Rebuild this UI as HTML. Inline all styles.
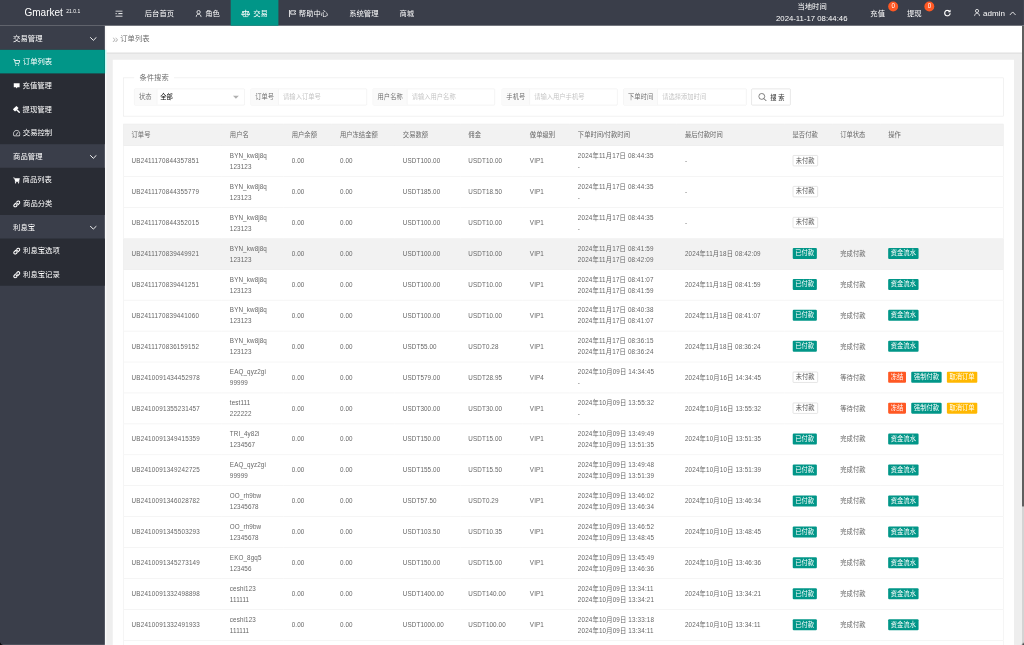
<!DOCTYPE html>
<html lang="zh-CN">
<head>
<meta charset="utf-8">
<title>Gmarket</title>
<style>
:root{--s:0.5243;}
*{box-sizing:border-box;margin:0;padding:0;}
html,body{width:1024px;height:645px;overflow:hidden;background:#f2f2f2;}
body{font-family:"Liberation Sans","Noto Sans CJK SC",sans-serif;color:#666;}
#app{position:absolute;left:0;top:0;width:1953.08px;height:1230.21px;transform:scale(var(--s)) rotate(0.0001deg);transform-origin:0 0;overflow:hidden;font-size:14px;opacity:.9999;}
.abs{position:absolute;}
svg{display:block;}
/* header */
.header{position:absolute;left:0;top:0;right:0;height:49.3px;background:#393d49;color:#fff;}
.logo{position:absolute;left:0;top:0;width:200px;height:49.3px;line-height:49.3px;color:#fff;}
.logo b{position:absolute;left:calc(24.5px / var(--s));top:0;font-weight:normal;font-size:19.1px;}
.logo sup{position:absolute;left:calc(66.3px / var(--s));top:-3.5px;font-size:9.5px;font-weight:normal;}
.nav{position:absolute;left:200px;top:0;height:49.3px;display:flex;}
.nav .it{height:49.3px;line-height:46px;padding:2.5px 20px 0;color:#fff;font-size:14px;display:flex;align-items:center;white-space:nowrap;}
.nav .it svg{margin-right:5px;}
.nav .it.on{background:#009688;}
.hr{position:absolute;top:0;height:50px;line-height:50px;color:#fff;font-size:14px;white-space:nowrap;}
.badge{position:absolute;width:19px;height:19px;border-radius:9.5px;background:#ff5722;color:#fff;font-size:12px;line-height:19px;text-align:center;}
/* side */
.side{position:absolute;left:0;top:49px;padding-top:1px;width:200px;bottom:0;background:#393d49;}
.side .p,.side .c{position:relative;height:45px;line-height:48px;color:#fff;font-size:14px;padding-left:25px;white-space:nowrap;}
.side .g{background:#282b33;}
.side .c{display:flex;align-items:center;}
.side .c svg{margin-right:5px;flex:none;margin-top:2px;}
.side .c.on{background:#009688;}
.side .p svg{position:absolute;right:15px;top:19.5px;}
/* body */
.main{position:absolute;left:200px;top:49px;right:0;bottom:0;background:#eeeeee;font-weight:350;}
.crumb{position:absolute;left:0;top:0;right:0;height:54px;background:#fff;line-height:50px;font-size:14px;color:#666;border-bottom:3.5px solid #e3e3e3;}
.crumb i{font-style:normal;color:#b5b5b5;position:absolute;left:calc(7.4px / var(--s));top:0.5px;font-size:21px;}
.crumb span{position:absolute;left:calc(15.4px / var(--s));}
.card{position:absolute;background:#fff;left:calc(8.1px / var(--s));top:calc(33.4px / var(--s) + 1px);right:calc(9.8px / var(--s));height:1400px;}
.fs{position:absolute;left:calc(10.2px / var(--s));right:calc(10.6px / var(--s));top:calc(17.8px / var(--s));height:calc(39.2px / var(--s));border:1px solid #e6e6e6;}
.fs .lg{position:absolute;left:20px;top:-12px;height:22px;line-height:22px;padding:0 10px;background:#fff;font-size:14px;color:#666;}
.grp{position:absolute;top:20px;height:32px;border:1px solid #e9e9e9;border-radius:2px;font-size:12px;line-height:31px;display:flex;background:#fff;}
.grp .lb{background:#fafafa;border-right:1px solid #f0f0f0;padding:0 8px;color:#666;white-space:nowrap;}
.grp .in{flex:1;padding-left:8px;color:#c0c0c0;white-space:nowrap;position:relative;}
.grp .in.v{color:#000;font-weight:400;padding-left:5.5px;}
.sbtn{position:absolute;top:20px;height:32px;border:1px solid #d2d2d2;border-radius:2px;font-size:12px;line-height:31px;color:#555;background:#fff;white-space:nowrap;}
/* table */
table{position:absolute;left:calc(10.2px / var(--s));top:calc(64.2px / var(--s));border-collapse:collapse;table-layout:fixed;font-size:12px;color:#666;background:linear-gradient(to bottom,#f2f2f2 0,#f2f2f2 41.5px,#fff 41.5px,#fff 218.5px,#f2f2f2 218.5px,#f2f2f2 277.5px,#fff 277.5px);}
th,td{border:1px solid #ececec;border-left:none;border-right:none;padding:0 15px;text-align:left;font-weight:normal;line-height:21px;padding-top:1.5px;white-space:nowrap;overflow:hidden;letter-spacing:.2px;}
thead th{height:41px;letter-spacing:0;padding-top:3.5px;}
tbody td{height:59px;}
td.o{letter-spacing:.4px;}
td.t{letter-spacing:.3px;}

table{border:1px solid #ececec;}
.btn{position:relative;top:-1.3px;display:inline-block;height:21px;line-height:21px;padding:0 5px;font-size:12px;border-radius:2px;color:#fff;margin-right:10px;vertical-align:middle;letter-spacing:0;}
.btn-g{background:#009688;}
.btn-r{background:#ff5722;}
.btn-y{background:#ffb800;}
.btn-pri{background:#fff;color:#555;border:1px solid #cfcfcf;line-height:19px;}
.sb{will-change:transform;position:absolute;right:0;top:49.3px;width:4.2px;bottom:0;background:#d4d4d4;}
.sb div{position:absolute;left:0;right:0;top:0;height:calc(480.8px / var(--s));background:#5e5e5e;}
</style>
</head>
<body>
<div id="app">
  <div class="main">
    <div class="card">
      <div class="fs">
        <div class="lg">条件搜索</div>
        <div class="grp" style="left:calc(11.2px / var(--s) - 1px);width:calc(110.3px / var(--s));"><div class="lb" style="padding-right:10px">状态</div><div class="in v">全部<svg class="abs" style="right:10px;top:12.5px" width="12" height="6.5" viewBox="0 0 12 6.5"><path d="M0 0h12L6 6.5z" fill="#b0b0b0"/></svg></div></div>
        <div class="grp" style="left:calc(127.4px / var(--s) - 1px);width:calc(116.2px / var(--s));"><div class="lb">订单号</div><div class="in">请输入订单号</div></div>
        <div class="grp" style="left:calc(249.7px / var(--s) - 1px);width:calc(122.3px / var(--s));"><div class="lb">用户名称</div><div class="in">请输入用户名称</div></div>
        <div class="grp" style="left:calc(378.5px / var(--s) - 1px);width:calc(116.2px / var(--s));"><div class="lb">手机号</div><div class="in">请输入用户手机号</div></div>
        <div class="grp" style="left:calc(500.2px / var(--s) - 1px);width:calc(123px / var(--s));"><div class="lb">下单时间</div><div class="in">请选择添加时间</div></div>
        <div class="sbtn" style="left:calc(628.3px / var(--s) - 1px);width:calc(39px / var(--s));"><svg class="abs" style="left:11.5px;top:7.5px" width="17" height="17" viewBox="0 0 16 16"><circle cx="6.5" cy="6.5" r="5.3" fill="none" stroke="#555" stroke-width="1.3"/><path d="M10.3 10.3L14.6 14.6" stroke="#555" stroke-width="1.7" fill="none"/></svg><span class="abs" style="left:35px;top:1.5px;font-weight:500;color:#444">搜 索</span></div>
      </div>
      <table>
        <colgroup><col style="width:188.06px"><col style="width:118.06px"><col style="width:91.93px"><col style="width:119.97px"><col style="width:124.93px"><col style="width:117.3px"><col style="width:91.55px"><col style="width:204.27px"><col style="width:205.23px"><col style="width:90.79px"><col style="width:91.55px"><col style="width:234.22px"></colgroup>
        <thead><tr><th>订单号</th><th>用户名</th><th>用户余额</th><th>用户冻结金额</th><th>交易数额</th><th>佣金</th><th>做单级别</th><th>下单时间/付款时间</th><th>最后付款时间</th><th>是否付款</th><th>订单状态</th><th>操作</th></tr></thead>
        <tbody>
<tr><td class="o">UB2411170844357851</td><td>BYN_kw8j8q<br>123123</td><td>0.00</td><td>0.00</td><td>USDT100.00</td><td>USDT10.00</td><td>VIP1</td><td class="t">2024年11月17日 08:44:35<br>-</td><td class="t">-</td><td><span class="btn btn-pri">未付款</span></td><td></td><td></td></tr>
<tr><td class="o">UB2411170844355779</td><td>BYN_kw8j8q<br>123123</td><td>0.00</td><td>0.00</td><td>USDT185.00</td><td>USDT18.50</td><td>VIP1</td><td class="t">2024年11月17日 08:44:35<br>-</td><td class="t">-</td><td><span class="btn btn-pri">未付款</span></td><td></td><td></td></tr>
<tr><td class="o">UB2411170844352015</td><td>BYN_kw8j8q<br>123123</td><td>0.00</td><td>0.00</td><td>USDT100.00</td><td>USDT10.00</td><td>VIP1</td><td class="t">2024年11月17日 08:44:35<br>-</td><td class="t">-</td><td><span class="btn btn-pri">未付款</span></td><td></td><td></td></tr>
<tr class="hov"><td class="o">UB2411170839449921</td><td>BYN_kw8j8q<br>123123</td><td>0.00</td><td>0.00</td><td>USDT100.00</td><td>USDT10.00</td><td>VIP1</td><td class="t">2024年11月17日 08:41:59<br>2024年11月17日 08:42:09</td><td class="t">2024年11月18日 08:42:09</td><td><span class="btn btn-g">已付款</span></td><td>完成付款</td><td><span class="btn btn-g">资金流水</span></td></tr>
<tr><td class="o">UB2411170839441251</td><td>BYN_kw8j8q<br>123123</td><td>0.00</td><td>0.00</td><td>USDT100.00</td><td>USDT10.00</td><td>VIP1</td><td class="t">2024年11月17日 08:41:07<br>2024年11月17日 08:41:59</td><td class="t">2024年11月18日 08:41:59</td><td><span class="btn btn-g">已付款</span></td><td>完成付款</td><td><span class="btn btn-g">资金流水</span></td></tr>
<tr><td class="o">UB2411170839441060</td><td>BYN_kw8j8q<br>123123</td><td>0.00</td><td>0.00</td><td>USDT100.00</td><td>USDT10.00</td><td>VIP1</td><td class="t">2024年11月17日 08:40:38<br>2024年11月17日 08:41:07</td><td class="t">2024年11月18日 08:41:07</td><td><span class="btn btn-g">已付款</span></td><td>完成付款</td><td><span class="btn btn-g">资金流水</span></td></tr>
<tr><td class="o">UB2411170836159152</td><td>BYN_kw8j8q<br>123123</td><td>0.00</td><td>0.00</td><td>USDT55.00</td><td>USDT0.28</td><td>VIP1</td><td class="t">2024年11月17日 08:36:15<br>2024年11月17日 08:36:24</td><td class="t">2024年11月18日 08:36:24</td><td><span class="btn btn-g">已付款</span></td><td>完成付款</td><td><span class="btn btn-g">资金流水</span></td></tr>
<tr><td class="o">UB2410091434452978</td><td>EAQ_qyz2gi<br>99999</td><td>0.00</td><td>0.00</td><td>USDT579.00</td><td>USDT28.95</td><td>VIP4</td><td class="t">2024年10月09日 14:34:45<br>-</td><td class="t">2024年10月16日 14:34:45</td><td><span class="btn btn-pri">未付款</span></td><td>等待付款</td><td><span class="btn btn-r">冻结</span><span class="btn btn-g">强制付款</span><span class="btn btn-y">取消订单</span></td></tr>
<tr><td class="o">UB2410091355231457</td><td>test111<br>222222</td><td>0.00</td><td>0.00</td><td>USDT300.00</td><td>USDT30.00</td><td>VIP1</td><td class="t">2024年10月09日 13:55:32<br>-</td><td class="t">2024年10月16日 13:55:32</td><td><span class="btn btn-pri">未付款</span></td><td>等待付款</td><td><span class="btn btn-r">冻结</span><span class="btn btn-g">强制付款</span><span class="btn btn-y">取消订单</span></td></tr>
<tr><td class="o">UB2410091349415359</td><td>TRI_4y82i<br>1234567</td><td>0.00</td><td>0.00</td><td>USDT150.00</td><td>USDT15.00</td><td>VIP1</td><td class="t">2024年10月09日 13:49:49<br>2024年10月09日 13:51:35</td><td class="t">2024年10月10日 13:51:35</td><td><span class="btn btn-g">已付款</span></td><td>完成付款</td><td><span class="btn btn-g">资金流水</span></td></tr>
<tr><td class="o">UB2410091349242725</td><td>EAQ_qyz2gi<br>99999</td><td>0.00</td><td>0.00</td><td>USDT155.00</td><td>USDT15.50</td><td>VIP1</td><td class="t">2024年10月09日 13:49:48<br>2024年10月09日 13:51:39</td><td class="t">2024年10月10日 13:51:39</td><td><span class="btn btn-g">已付款</span></td><td>完成付款</td><td><span class="btn btn-g">资金流水</span></td></tr>
<tr><td class="o">UB2410091346028782</td><td>OO_rh9bw<br>12345678</td><td>0.00</td><td>0.00</td><td>USDT57.50</td><td>USDT0.29</td><td>VIP1</td><td class="t">2024年10月09日 13:46:02<br>2024年10月09日 13:46:34</td><td class="t">2024年10月10日 13:46:34</td><td><span class="btn btn-g">已付款</span></td><td>完成付款</td><td><span class="btn btn-g">资金流水</span></td></tr>
<tr><td class="o">UB2410091345503293</td><td>OO_rh9bw<br>12345678</td><td>0.00</td><td>0.00</td><td>USDT103.50</td><td>USDT10.35</td><td>VIP1</td><td class="t">2024年10月09日 13:46:52<br>2024年10月09日 13:48:45</td><td class="t">2024年10月10日 13:48:45</td><td><span class="btn btn-g">已付款</span></td><td>完成付款</td><td><span class="btn btn-g">资金流水</span></td></tr>
<tr><td class="o">UB2410091345273149</td><td>EKO_8gq5<br>123456</td><td>0.00</td><td>0.00</td><td>USDT150.00</td><td>USDT15.00</td><td>VIP1</td><td class="t">2024年10月09日 13:45:49<br>2024年10月09日 13:46:36</td><td class="t">2024年10月10日 13:46:36</td><td><span class="btn btn-g">已付款</span></td><td>完成付款</td><td><span class="btn btn-g">资金流水</span></td></tr>
<tr><td class="o">UB2410091332498898</td><td>ceshi123<br>111111</td><td>0.00</td><td>0.00</td><td>USDT1400.00</td><td>USDT140.00</td><td>VIP1</td><td class="t">2024年10月09日 13:34:11<br>2024年10月09日 13:34:21</td><td class="t">2024年10月10日 13:34:21</td><td><span class="btn btn-g">已付款</span></td><td>完成付款</td><td><span class="btn btn-g">资金流水</span></td></tr>
<tr><td class="o">UB2410091332491933</td><td>ceshi123<br>111111</td><td>0.00</td><td>0.00</td><td>USDT1000.00</td><td>USDT100.00</td><td>VIP1</td><td class="t">2024年10月09日 13:33:18<br>2024年10月09日 13:34:11</td><td class="t">2024年10月10日 13:34:11</td><td><span class="btn btn-g">已付款</span></td><td>完成付款</td><td><span class="btn btn-g">资金流水</span></td></tr>
<tr><td class="o">UB2410091332489574</td><td>ceshi123<br>111111</td><td>0.00</td><td>0.00</td><td>USDT200.00</td><td>USDT20.00</td><td>VIP1</td><td class="t">2024年10月09日 13:32:48<br>2024年10月09日 13:33:18</td><td class="t">2024年10月10日 13:33:18</td><td><span class="btn btn-g">已付款</span></td><td>完成付款</td><td><span class="btn btn-g">资金流水</span></td></tr>
        </tbody>
      </table>
    </div>
    <div class="crumb"><i>»</i><span>订单列表</span></div>
  </div>

  <div class="abs" style="left:200px;top:49px;bottom:0;width:2.5px;background:#f9f9f9"></div><div class="abs" style="left:200px;top:95px;height:45px;width:2.5px;background:#c4fff8"></div>
  <div class="side">
    <div class="p">交易管理<svg width="14" height="9" viewBox="0 0 14 9"><path d="M1 1l6 6 6-6" fill="none" stroke="#fff" stroke-width="1.8"/></svg></div>
    <div class="g">
    <div class="c on"><svg width="13.5" height="14" viewBox="0 0 13.5 14"><path d="M0 1h2.4l2 7.9h6.8l1.5-5.5H3.2" fill="none" stroke="#fff" stroke-width="1.6"/><circle cx="5" cy="12.2" r="1.4" fill="#fff"/><circle cx="10.4" cy="12.2" r="1.4" fill="#fff"/></svg>订单列表</div>
    <div class="c"><svg width="13" height="14" viewBox="0 0 13 14"><path d="M1.2 2h11.3v7.6H8.2L6.8 11.6 5.4 9.6H1.2z" fill="#fff"/></svg>充值管理</div>
    <div class="c"><svg width="13" height="14" viewBox="0 0 13 14"><g transform="rotate(-45 5 5.4)"><rect x="0.2" y="2.4" width="9.6" height="6" rx="0.8" fill="#fff"/></g><path d="M6.8 7.2L11.8 12.2" stroke="#fff" stroke-width="2.8" stroke-linecap="round"/></svg>提现管理</div>
    <div class="c"><svg width="13.5" height="14" viewBox="0 0 13.5 14"><path d="M1.6 12.2C-1 8 1.5 1.8 6.75 1.8S14.5 8 11.9 12.2z" fill="none" stroke="#fff" stroke-width="1.5" stroke-linejoin="round"/><path d="M6.2 9.6L9 5.8" stroke="#fff" stroke-width="1.6" stroke-linecap="round"/></svg>交易控制</div>
    </div>
    <div class="p">商品管理<svg width="14" height="9" viewBox="0 0 14 9"><path d="M1 1l6 6 6-6" fill="none" stroke="#fff" stroke-width="1.8"/></svg></div>
    <div class="g">
    <div class="c"><svg width="13" height="14" viewBox="0 0 13 14"><path d="M0 1.6h2.6l0.5 1.6H13l-1.5 5.6H3.9L1.9 3H0z" fill="#fff"/><path d="M3.4 8.4h8.4v1.4H3.4z" fill="#fff"/><circle cx="4.7" cy="11.6" r="1.3" fill="#fff"/><circle cx="10.4" cy="11.6" r="1.3" fill="#fff"/></svg>商品列表</div>
    <div class="c"><svg class="lk" width="14" height="14" viewBox="0 0 15 15"><g fill="none" stroke="#fff" stroke-width="2.3" stroke-linecap="round"><path d="M6.3 8.7a2.8 2.8 0 0 0 4 0l2.4-2.4a2.8 2.8 0 0 0-4-4L7.6 3.4"/><path d="M8.7 6.3a2.8 2.8 0 0 0-4 0L2.3 8.7a2.8 2.8 0 0 0 4 4l1.1-1.1"/></g></svg>商品分类</div>
    </div>
    <div class="p">利息宝<svg width="14" height="9" viewBox="0 0 14 9"><path d="M1 1l6 6 6-6" fill="none" stroke="#fff" stroke-width="1.8"/></svg></div>
    <div class="g">
    <div class="c"><svg class="lk" width="14" height="14" viewBox="0 0 15 15"><g fill="none" stroke="#fff" stroke-width="2.3" stroke-linecap="round"><path d="M6.3 8.7a2.8 2.8 0 0 0 4 0l2.4-2.4a2.8 2.8 0 0 0-4-4L7.6 3.4"/><path d="M8.7 6.3a2.8 2.8 0 0 0-4 0L2.3 8.7a2.8 2.8 0 0 0 4 4l1.1-1.1"/></g></svg>利息宝选项</div>
    <div class="c"><svg class="lk" width="14" height="14" viewBox="0 0 15 15"><g fill="none" stroke="#fff" stroke-width="2.3" stroke-linecap="round"><path d="M6.3 8.7a2.8 2.8 0 0 0 4 0l2.4-2.4a2.8 2.8 0 0 0-4-4L7.6 3.4"/><path d="M8.7 6.3a2.8 2.8 0 0 0-4 0L2.3 8.7a2.8 2.8 0 0 0 4 4l1.1-1.1"/></g></svg>利息宝记录</div>
    </div>
  </div>

  <div class="header">
    <div class="logo"><b>Gmarket</b><sup>21.0.1</sup></div>
    <div class="nav">
      <div class="it" style="padding-right:22px"><svg style="margin:0" width="14" height="12" viewBox="0 0 14 12"><path d="M0 1h14M0 6h14M0 11h14" stroke="#fff" stroke-width="1.9"/><path d="M2.5 3L6.5 6 2.5 9z" fill="#393d49"/></svg></div>
      <div class="it">后台首页</div>
      <div class="it"><svg style="margin:0 7px 0 1px" width="11.5" height="14.4" viewBox="0 0 12 15"><circle cx="6" cy="4.3" r="3.3" fill="none" stroke="#fff" stroke-width="1.6"/><path d="M0.9 14.6c0-3.8 2-6 5.1-6s5.1 2.2 5.1 6" fill="none" stroke="#fff" stroke-width="1.6"/></svg>角色</div>
      <div class="it on"><svg style="margin-right:6.5px;margin-top:-1.5px" width="17" height="15" viewBox="0 -1 17 15"><g fill="none" stroke="#fff" stroke-width="1.5"><path d="M8.5 -0.8v13.3M3.5 13h10M2 3h13"/><path d="M0.8 8.4L3.5 3.2l2.7 5.2a2.9 2.6 0 0 1-5.4 0zM10.8 8.4l2.7-5.2 2.7 5.2a2.9 2.6 0 0 1-5.4 0z"/><path d="M0.8 8.6h5.4M10.8 8.6h5.4"/></g></svg>交易</div>
      <div class="it"><svg width="14" height="14" viewBox="0 0 14 14"><path d="M0.9 0v14" stroke="#fff" stroke-width="1.8"/><path d="M3.6 1.6h9.6l-2.3 3.2 2.3 3.2H3.6z" fill="none" stroke="#fff" stroke-width="1.6"/></svg>帮助中心</div>
      <div class="it">系统管理</div>
      <div class="it">商城</div>
    </div>
    <div class="hr" style="left:calc(797.4px / var(--s));top:-13.5px;">当地时间</div>
    <div class="hr" style="left:calc(776px / var(--s));top:10px;font-size:14.8px;">2024-11-17 08:44:46</div>
    <div class="hr" style="left:calc(870.3px / var(--s));">充值</div>
    <div class="badge" style="left:calc(888.3px / var(--s));top:2.5px;">0</div>
    <div class="hr" style="left:calc(907px / var(--s));">提现</div>
    <div class="badge" style="left:calc(924.4px / var(--s));top:2.5px;">0</div>
    <svg class="abs" style="left:calc(943.9px / var(--s));top:18px" width="14" height="14" viewBox="0 0 14 14"><path d="M12.2 7.4a5.2 5.2 0 1 1-1.7-4.2" fill="none" stroke="#fff" stroke-width="2.3"/><path d="M7.6 5.2l5.6.3-.3-5.5z" fill="#fff"/></svg>
    <svg class="abs" style="left:calc(974.1px / var(--s));top:17px" width="11" height="14" viewBox="0 0 11 14"><circle cx="5.5" cy="3.9" r="3" fill="none" stroke="#fff" stroke-width="1.5"/><path d="M0.8 13.8c0-3.6 1.9-5.6 4.7-5.6s4.7 2 4.7 5.6" fill="none" stroke="#fff" stroke-width="1.5"/></svg>
    <div class="hr" style="left:calc(983px / var(--s));font-size:15.3px;">admin</div>
    <svg class="abs" style="left:calc(1009.3px / var(--s));top:20.5px" width="13" height="9" viewBox="0 0 13 9"><path d="M0.8 7.8L6.5 1.8 12.2 7.8" fill="none" stroke="#fff" stroke-width="1.6"/></svg>
  </div>
  <div class="sb"><div></div></div>
  <div class="abs" style="right:0;bottom:0;width:6px;height:6px;background:radial-gradient(circle at 0 0,rgba(0,0,0,0) 5px,#000 6.5px)"></div>
  <div class="abs" style="left:0;bottom:0;width:6px;height:6px;background:radial-gradient(circle at 100% 0,rgba(0,0,0,0) 5px,#000 6.5px)"></div>
</div>
</body>
</html>
